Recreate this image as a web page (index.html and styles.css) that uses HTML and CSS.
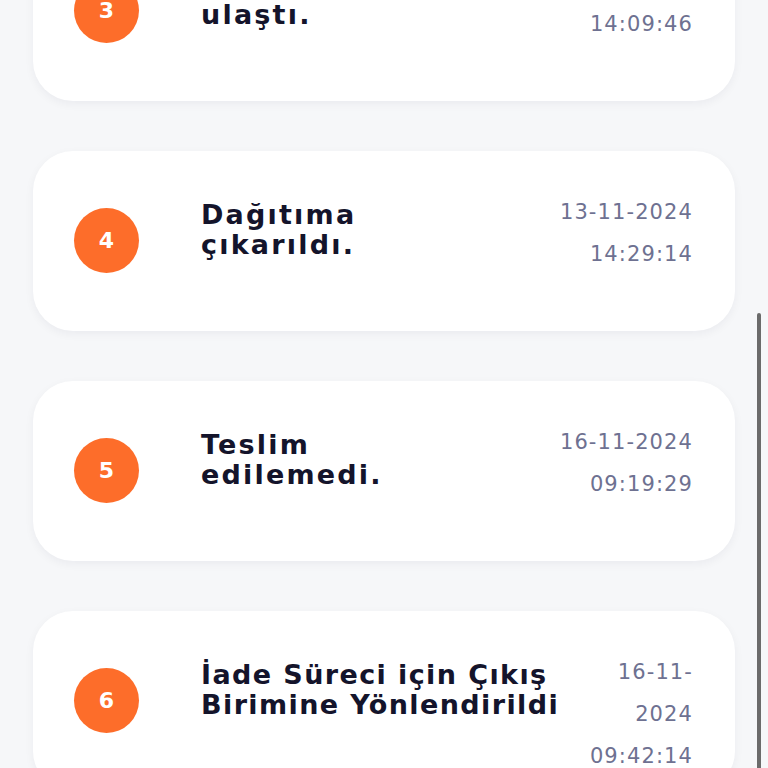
FILE: index.html
```html
<!DOCTYPE html>
<html lang="tr">
<head>
<meta charset="utf-8">
<title>Kargo Takip</title>
<link rel="stylesheet" href="styles.css">
</head>
<body>
<div class="list">
  <div class="card">
    <div class="step">3</div>
    <div class="title">Şubeye<br>ulaştı.</div>
    <div class="date"><div>13-11-2024</div><div>14:09:46</div></div>
  </div>
  <div class="card">
    <div class="step">4</div>
    <div class="title">Dağıtıma<br>çıkarıldı.</div>
    <div class="date"><div>13-11-2024</div><div>14:29:14</div></div>
  </div>
  <div class="card">
    <div class="step">5</div>
    <div class="title">Teslim<br>edilemedi.</div>
    <div class="date"><div>16-11-2024</div><div>09:19:29</div></div>
  </div>
  <div class="card">
    <div class="step">6</div>
    <div class="title title-long">İade Süreci için Çıkış<br>Birimine Yönlendirildi</div>
    <div class="date"><div>16-11-</div><div>2024</div><div>09:42:14</div></div>
  </div>
</div>
<div class="scrollbar"></div>
</body>
</html>
```
FILE: styles.css
```css
html, body {
  margin: 0;
  padding: 0;
  background: #f6f7f9;
  height: 768px;
  overflow: hidden;
}
.list {
  margin-top: -79px;
  padding: 0 33px;
  display: flex;
  flex-direction: column;
  gap: 50px;
}
.card {
  background: #ffffff;
  border-radius: 40px;
  min-height: 180px;
  box-sizing: border-box;
  padding: 40px 42px 14px 41px;
  display: flex;
  align-items: flex-start;
  box-shadow: 0 3px 10px rgba(20, 20, 60, 0.05);
}
.step {
  flex: 0 0 65px;
  width: 65px;
  height: 65px;
  margin-top: 17px;
  border-radius: 50%;
  background: #fd6d2a;
  color: #ffffff;
  font-family: "DejaVu Sans", sans-serif;
  font-weight: bold;
  font-size: 22px;
  display: flex;
  align-items: center;
  justify-content: center;
}
.title {
  flex: 1 1 auto;
  margin-left: 62px;
  margin-top: 9px;
  font-family: "DejaVu Sans", sans-serif;
  font-weight: bold;
  font-size: 27px;
  line-height: 30px;
  letter-spacing: 2.2px;
  color: #14142b;
  white-space: nowrap;
}
.title-long {
  letter-spacing: 1.4px;
}
.date {
  flex: 0 0 auto;
  text-align: right;
  font-family: "DejaVu Sans", sans-serif;
  font-size: 21px;
  line-height: 42px;
  letter-spacing: 1.1px;
  color: #6e7191;
}
.scrollbar {
  position: fixed;
  right: 7px;
  top: 313px;
  width: 4px;
  height: 470px;
  border-radius: 2px;
  background: #6b6b6b;
}
```
